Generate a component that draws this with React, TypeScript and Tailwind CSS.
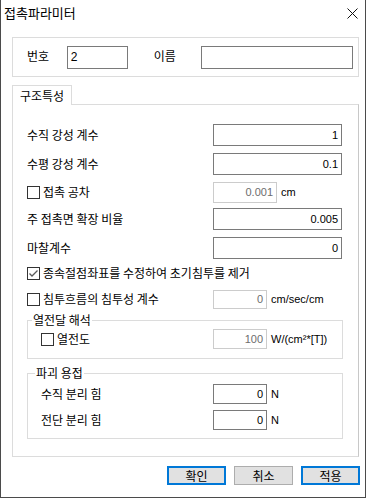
import type { ReactNode } from "react"

const num = "font-['Liberation_Sans',Arial,sans-serif] text-[11px]"

function CheckBox({ checked = false }: { checked?: boolean }) {
    return (
        <span className="w-[13px] h-[13px] border border-[#333333] bg-white flex items-center justify-center shrink-0">
            {checked && (
                <svg width="11" height="11" viewBox="0 0 11 11">
                    <path d="M1.5 5.5 L4 8 L9.5 2.5" fill="none" stroke="#5a5a5a" strokeWidth="1.3" />
                </svg>
            )}
        </span>
    )
}

function Field({ value, w, h = 22, disabled = false }: { value: string; w: number; h?: number; disabled?: boolean }) {
    return (
        <div
            className={`flex items-center justify-end pr-[3px] border bg-white ${num} ${disabled ? "border-[#cccccc] text-[#6d6d6d]" : "border-[#7a7a7a] text-black"}`}
            style={{ width: w, height: h }}
        >
            {value}
        </div>
    )
}

function Unit({ children }: { children: ReactNode }) {
    return <span className={`${num} ml-[4px] text-black`}>{children}</span>
}

function Button({ label, primary = false }: { label: string; primary?: boolean }) {
    return (
        <button
            className={`w-[59px] h-[19px] bg-[#e1e1e1] flex items-center justify-center text-[12px] leading-none ${primary ? "border-2 border-[#0078d7]" : "border border-[#adadad]"}`}
        >
            {label}
        </button>
    )
}

export default function App() {
    return (
        <div className="w-[370px] h-[499px] bg-white text-black text-[12px] font-['Noto_Sans_CJK_KR','Noto_Sans',sans-serif]">
            <div className="w-[366px] h-[498px] border-x border-b border-[#4b4b4b] flex flex-col">

                {/* Title bar */}
                <div className="h-[30px] flex items-center justify-between pl-[3px] pr-[6px] shrink-0">
                    <span className="text-[13px] -mt-[4px]">접촉파라미터</span>
                    <svg width="11" height="11" viewBox="0 0 11 11" className="mr-[1px] -mt-[3px]">
                        <path d="M0.5 0.5 L10.5 10.5 M10.5 0.5 L0.5 10.5" stroke="#111" strokeWidth="1" />
                    </svg>
                </div>

                <div className="pl-[11px] pr-[6px]">
                    {/* Number / name */}
                    <div className="mt-[7px] h-[40px] border border-[#dcdcdc] flex items-center pl-[14px] pr-[5px]">
                        <span className="w-[40px] -mt-[3px]">번호</span>
                        <div className={`w-[61px] h-[23px] border border-[#7a7a7a] flex items-center pl-[3px] ${num} text-[12px]`}>2</div>
                        <span className="ml-[26px] w-[47px] -mt-[3px]">이름</span>
                        <div className="w-[153px] h-[23px] border border-[#7a7a7a]" />
                    </div>

                    {/* Tab */}
                    <div className="mt-[8px] relative z-10 -mb-px w-[60px] h-[20px] border-x border-t border-[#dcdcdc] bg-white pl-[7px] flex items-center">
                        구조특성
                    </div>

                    {/* Panel */}
                    <div className="h-[353px] border border-[#dcdcdc] border-r-[#c8c8c8] pl-[14px] flex flex-col">
                        <div className="mt-[19px] h-[22px] flex items-center">
                            <span className="w-[186px]">수직 강성 계수</span>
                            <Field value="1" w={129} />
                        </div>
                        <div className="mt-[7px] h-[22px] flex items-center">
                            <span className="w-[186px]">수평 강성 계수</span>
                            <Field value="0.1" w={129} />
                        </div>
                        <div className="mt-[6px] h-[22px] flex items-center">
                            <span className="w-[186px] flex items-center gap-[3px]"><CheckBox />접촉 공차</span>
                            <Field value="0.001" w={64} h={21} disabled />
                            <Unit>cm</Unit>
                        </div>
                        <div className="mt-[5px] h-[22px] flex items-center">
                            <span className="w-[186px]">주 접촉면 확장 비율</span>
                            <Field value="0.005" w={129} />
                        </div>
                        <div className="mt-[7px] h-[22px] flex items-center">
                            <span className="w-[186px]">마찰계수</span>
                            <Field value="0" w={129} />
                        </div>
                        <div className="mt-[3px] h-[22px] flex items-center gap-[3px]">
                            <CheckBox checked />종속절점좌표를 수정하여 초기침투를 제거
                        </div>
                        <div className="mt-[4px] h-[22px] flex items-center">
                            <span className="w-[186px] flex items-center gap-[3px]"><CheckBox />침투흐름의 침투성 계수</span>
                            <Field value="0" w={54} h={19} disabled />
                            <Unit>cm/sec/cm</Unit>
                        </div>

                        {/* Heat transfer group */}
                        <fieldset className="mt-[2px] w-[316px] border border-[#dcdcdc] pb-[9px]">
                            <legend className="ml-[4px] px-[1px] leading-[16px]">열전달 해석</legend>
                            <div className="mt-[1px] ml-[13px] h-[20px] flex items-center">
                                <span className="w-[172px] flex items-center gap-[3px]"><CheckBox />열전도</span>
                                <Field value="100" w={54} h={20} disabled />
                                <Unit>W/(cm²*[T])</Unit>
                            </div>
                        </fieldset>

                        {/* Fracture group */}
                        <fieldset className="mt-[6px] w-[316px] border border-[#dcdcdc] pb-[8px]">
                            <legend className="ml-[7px] px-[1px] leading-[16px]">파괴 용접</legend>
                            <div className="mt-[3px] ml-[13px] h-[20px] flex items-center">
                                <span className="w-[172px]">수직 분리 힘</span>
                                <Field value="0" w={54} h={20} />
                                <Unit>N</Unit>
                            </div>
                            <div className="mt-[6px] ml-[13px] h-[20px] flex items-center">
                                <span className="w-[172px]">전단 분리 힘</span>
                                <Field value="0" w={54} h={20} />
                                <Unit>N</Unit>
                            </div>
                        </fieldset>
                    </div>
                </div>

                {/* Buttons */}
                <div className="mt-[9px] flex justify-end gap-[8px] pr-[5px]">
                    <Button label="확인" primary />
                    <Button label="취소" />
                    <Button label="적용" primary />
                </div>
            </div>
        </div>
    )
}
